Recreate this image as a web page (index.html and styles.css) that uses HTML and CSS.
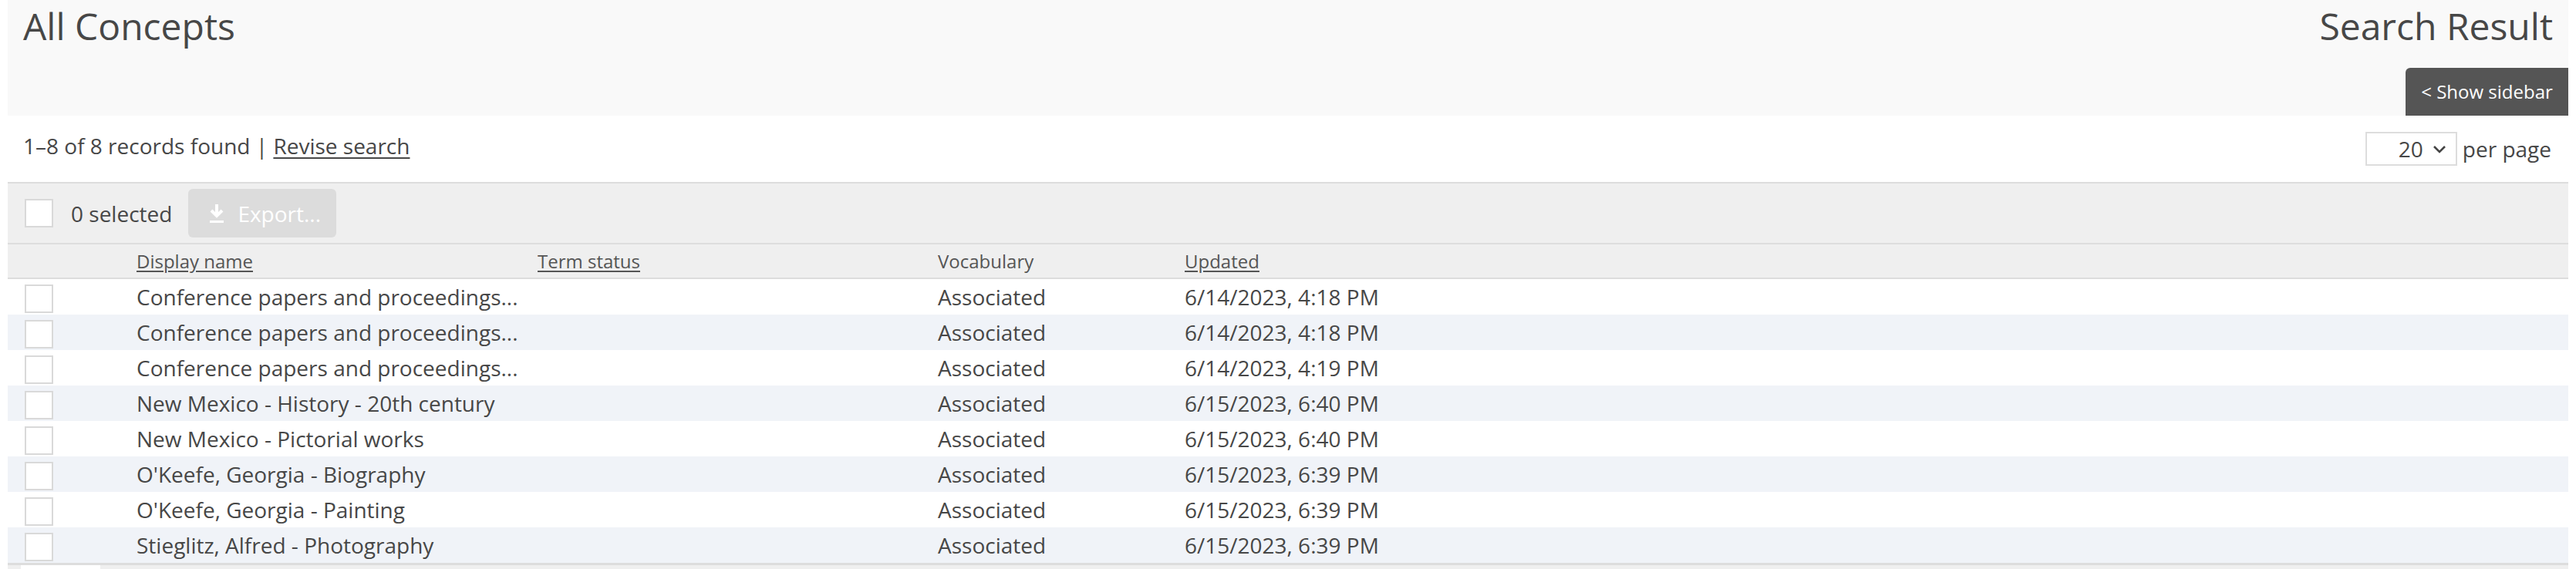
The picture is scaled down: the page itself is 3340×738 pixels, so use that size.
FILE: index.html
```html
<!DOCTYPE html>
<html>
<head>
<meta charset="utf-8">
<link rel="stylesheet" href="styles.css">
</head>
<body>
<div class="page">
  <header class="hdr">
    <h1 class="title">All Concepts</h1>
    <div class="hdr-right">
      <div class="hdr-title">Search Result</div>
      <button class="sidebar-btn">&lt; Show sidebar</button>
    </div>
  </header>

  <div class="summary">
    <div class="count">1–8 of 8 records found | <a class="link" href="#">Revise search</a></div>
    <div class="perpage">
      <div class="select">
        <span>20</span>
        <svg class="chev" width="18" height="11" viewBox="0 0 18 11"><path d="M2 2 L9 9 L16 2" fill="none" stroke="#444" stroke-width="2.6"/></svg>
      </div>
      <span>per page</span>
    </div>
  </div>

  <div class="toolbar">
    <span class="cb"></span>
    <span class="sel">0 selected</span>
    <button class="export">
      <svg width="22" height="27" viewBox="0 0 22 27"><path d="M11 2 V15 M4 10 L11 17 L18 10" fill="none" stroke="#fff" stroke-width="4"/><rect x="2" y="23" width="18" height="3" fill="#fff"/></svg>
      <span>Export...</span>
    </button>
  </div>

  <table class="grid">
    <colgroup>
      <col class="c-cb"><col class="c-name"><col class="c-status"><col class="c-vocab"><col>
    </colgroup>
    <thead>
      <tr>
        <th></th>
        <th><a class="hlink" href="#">Display name</a></th>
        <th><a class="hlink" href="#">Term status</a></th>
        <th><span class="hplain">Vocabulary</span></th>
        <th><a class="hlink" href="#">Updated</a></th>
      </tr>
    </thead>
    <tbody>
      <tr><td><span class="cb"></span></td><td>Conference papers and proceedings...</td><td></td><td>Associated</td><td>6/14/2023, 4:18 PM</td></tr>
      <tr><td><span class="cb"></span></td><td>Conference papers and proceedings...</td><td></td><td>Associated</td><td>6/14/2023, 4:18 PM</td></tr>
      <tr><td><span class="cb"></span></td><td>Conference papers and proceedings...</td><td></td><td>Associated</td><td>6/14/2023, 4:19 PM</td></tr>
      <tr><td><span class="cb"></span></td><td>New Mexico - History - 20th century</td><td></td><td>Associated</td><td>6/15/2023, 6:40 PM</td></tr>
      <tr><td><span class="cb"></span></td><td>New Mexico - Pictorial works</td><td></td><td>Associated</td><td>6/15/2023, 6:40 PM</td></tr>
      <tr><td><span class="cb"></span></td><td>O'Keefe, Georgia - Biography</td><td></td><td>Associated</td><td>6/15/2023, 6:39 PM</td></tr>
      <tr><td><span class="cb"></span></td><td>O'Keefe, Georgia - Painting</td><td></td><td>Associated</td><td>6/15/2023, 6:39 PM</td></tr>
      <tr><td><span class="cb"></span></td><td>Stieglitz, Alfred - Photography</td><td></td><td>Associated</td><td>6/15/2023, 6:39 PM</td></tr>
    </tbody>
  </table>

  <div class="footer">
    <div class="footer-block"></div>
  </div>
</div>
</body>
</html>
```

FILE: styles.css
```css
html, body {
  margin: 0;
  padding: 0;
  background: #fff;
}

body {
  font-family: "Open Sans", "Noto Sans", sans-serif;
  color: #474747;
}

.page {
  padding: 0 10px;
}

.hdr {
  display: flex;
  justify-content: space-between;
  height: 150px;
  background: #f9f9f9;
  padding-left: 20px;
}

.title {
  margin: 0;
  font-size: 48px;
  font-weight: 400;
  line-height: 68px;
  color: #474747;
}

.hdr-right {
  display: flex;
  flex-direction: column;
  justify-content: space-between;
  align-items: flex-end;
}

.hdr-title {
  font-size: 48px;
  line-height: 68px;
  padding-right: 20px;
  color: #474747;
}

.sidebar-btn {
  font-family: "Open Sans", sans-serif;
  font-size: 24px;
  color: #fff;
  background: #555;
  border: 0;
  border-radius: 6px 0 0 0;
  width: 211px;
  height: 62px;
  padding: 0 0 2px;
}

.summary {
  display: flex;
  justify-content: space-between;
  align-items: center;
  height: 86px;
  padding: 0 22px 0 20px;
  font-size: 28px;
  box-sizing: border-box;
}

.count {
  padding-bottom: 9px;
}

.link {
  color: #474747;
  text-decoration: underline;
  text-underline-offset: 4px;
  text-decoration-thickness: 2px;
}

.perpage {
  display: flex;
  align-items: center;
  gap: 7px;
}

.select {
  width: 119px;
  height: 44px;
  box-sizing: border-box;
  border: 2px solid #dddddd;
  display: flex;
  align-items: center;
  justify-content: flex-end;
  gap: 12px;
  padding-right: 12px;
  font-size: 28px;
}

.chev {
  display: block;
}

.toolbar {
  display: flex;
  align-items: center;
  height: 77px;
  background: #efefef;
  border-top: 2px solid #dddddd;
  padding-left: 22px;
  font-size: 28px;
}

.cb {
  display: inline-block;
  width: 37px;
  height: 37px;
  box-sizing: border-box;
  border: 2px solid #d9d9d9;
  background: #fff;
  vertical-align: middle;
}

.sel {
  margin-left: 23px;
}

.export {
  margin-left: 21px;
  width: 192px;
  height: 63px;
  border: 0;
  border-radius: 6px;
  background: #dcdcdc;
  color: #fff;
  font-family: "Open Sans", sans-serif;
  font-size: 28px;
  display: flex;
  align-items: center;
  padding: 0 0 0 26px;
  gap: 16px;
}

.export svg {
  display: block;
}

.grid {
  width: 100%;
  border-collapse: collapse;
  table-layout: fixed;
}

.c-cb { width: 167px; }
.c-name { width: 520px; }
.c-status { width: 519px; }
.c-vocab { width: 320px; }

.grid thead tr {
  background: #efefef;
  border-top: 2px solid #dddddd;
  border-bottom: 2px solid #dddddd;
}

.grid th {
  height: 43px;
  padding: 0;
  text-align: left;
  font-weight: 400;
  font-size: 24px;
  vertical-align: middle;
}

.hlink, .hplain {
  color: #555;
}

.hlink {
  text-decoration: underline;
  text-underline-offset: 3px;
}

.grid td {
  height: 46px;
  padding: 0;
  font-size: 28px;
  white-space: nowrap;
  vertical-align: middle;
  color: #474747;
}

.grid td:first-child {
  padding-left: 22px;
}

.grid tbody tr:nth-child(even) {
  background: #f0f3f8;
}

.grid tbody tr:last-child {
  border-bottom: 3px solid #dddddd;
}

.footer {
  height: 40px;
  background: #efefef;
  padding-left: 17px;
}

.footer-block {
  width: 103px;
  height: 40px;
  background: #fff;
}
```
